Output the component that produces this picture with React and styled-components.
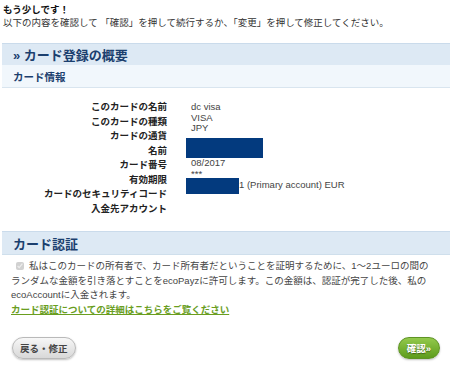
import React from 'react';
import styled, { createGlobalStyle } from 'styled-components';

const GlobalStyle = createGlobalStyle`
  body {
    margin: 0;
    background: #fff;
    font-family: "Liberation Sans", "Noto Sans CJK JP", sans-serif;
    color: #333;
  }
`;

const Page = styled.div`
  width: 450px;
  height: 368px;
  overflow: hidden;
`;

const Intro = styled.div`
  padding: 3px 0 0 3px;
  font-size: 9.5px;
  line-height: 13px;
`;

const IntroTitle = styled.div`
  font-weight: bold;
  color: #111;
`;

const SectionHead = styled.div`
  margin: ${props => props.top || '0'} 0 0 2px;
  height: ${props => props.height || '20px'};
  display: flex;
  align-items: center;
  padding-left: 11px;
  background: #dde9f4;
  border-top: 1px solid #cadbeb;
  border-bottom: 1px solid ${props => props.bottom || 'transparent'};
  font-size: 13px;
  font-weight: bold;
  color: #1b3f6e;
`;

const SubHead = styled.div`
  margin-left: 2px;
  height: 22px;
  display: flex;
  align-items: center;
  padding-left: 11px;
  background: #f1f7fc;
  border-bottom: 1px solid #d9e5ef;
  font-size: 10.5px;
  font-weight: bold;
  color: #1b3f6e;
`;

const InfoGrid = styled.div`
  display: grid;
  grid-template-columns: 167px 1fr;
  padding-top: 12px;
  height: 131px;
`;

const Labels = styled.div`
  display: flex;
  flex-direction: column;
  align-items: flex-end;
  font-size: 9.5px;
  font-weight: bold;
  line-height: 14.5px;
  color: #222;
  white-space: nowrap;
`;

const Values = styled.div`
  display: flex;
  flex-direction: column;
  padding: 2px 0 0 24px;
  font-size: 9.5px;
  line-height: 10.7px;
  color: #444;
`;

const Redacted = styled.span`
  display: inline-block;
  background: #033a7e;
  width: ${props => props.w}px;
  height: ${props => props.h}px;
  margin-left: -5px;
`;

const ValueRow = styled.div`
  display: flex;
  align-items: center;
  margin-top: ${props => props.gap || '0'};
  white-space: nowrap;
`;

const AuthText = styled.div`
  padding: 4px 0 0 11px;
  font-size: 9.5px;
  line-height: 14.5px;
  color: #444;
`;

const Check = styled.input`
  width: 8px;
  height: 8px;
  margin: 0 5px 0 5px;
  vertical-align: -1px;
`;

const DetailLink = styled.a`
  display: block;
  color: #6a9e1f;
  font-weight: bold;
  text-decoration: underline;
`;

const Footer = styled.div`
  display: flex;
  justify-content: space-between;
  align-items: center;
  padding: 20px 10px 0 12px;
`;

const Pill = styled.button`
  height: 22px;
  padding: 0 ${props => props.pad || '7px'};
  border-radius: 11px;
  font-family: inherit;
  font-size: 9.5px;
  font-weight: bold;
  cursor: pointer;
  border: 1px solid ${props => props.green ? '#5e9424' : '#b9b9b9'};
  color: ${props => props.green ? '#fff' : '#444'};
  background: ${props => props.green
    ? 'linear-gradient(#93c94c, #5d9c1c)'
    : 'linear-gradient(#f7f7f7, #d8d8d8)'};
  box-shadow: 0 1px 2px rgba(0, 0, 0, 0.25);
  text-shadow: ${props => props.green ? '0 1px 1px rgba(0,0,0,0.4)' : 'none'};
`;

const labels = [
  'このカードの名前',
  'このカードの種類',
  'カードの通貨',
  '名前',
  'カード番号',
  '有効期限',
  'カードのセキュリティコード',
  '入金先アカウント',
];

export default function App() {
  return (
    <Page>
      <GlobalStyle />
      <Intro>
        <IntroTitle>もう少しです！</IntroTitle>
        <div>以下の内容を確認して 「確認」を押して続行するか、「変更」を押して修正してください。</div>
      </Intro>

      <SectionHead top="14px">» カード登録の概要</SectionHead>
      <SubHead>カード情報</SubHead>

      <InfoGrid>
        <Labels>
          {labels.map(l => <span key={l}>{l}</span>)}
        </Labels>
        <Values>
          <ValueRow>dc visa</ValueRow>
          <ValueRow>VISA</ValueRow>
          <ValueRow>JPY</ValueRow>
          <ValueRow gap="4px"><Redacted w={77} h={20} /></ValueRow>
          <ValueRow>08/2017</ValueRow>
          <ValueRow>***</ValueRow>
          <ValueRow gap="-2px">
            <Redacted w={53} h={16} />
            <span>1 (Primary account) EUR</span>
          </ValueRow>
        </Values>
      </InfoGrid>

      <SectionHead height="22px" bottom="#cfdfec">カード認証</SectionHead>
      <AuthText>
        <Check type="checkbox" checked disabled readOnly />
        私はこのカードの所有者で、カード所有者だということを証明するために、1〜2ユーロの間の<br />
        ランダムな金額を引き落とすことをecoPayzに許可します。この金額は、認証が完了した後、私の<br />
        ecoAccountに入金されます。
        <DetailLink href="#">カード認証についての詳細はこちらをご覧ください</DetailLink>
      </AuthText>

      <Footer>
        <Pill>戻る・修正</Pill>
        <Pill green pad="8px">確認»</Pill>
      </Footer>
    </Page>
  );
}
